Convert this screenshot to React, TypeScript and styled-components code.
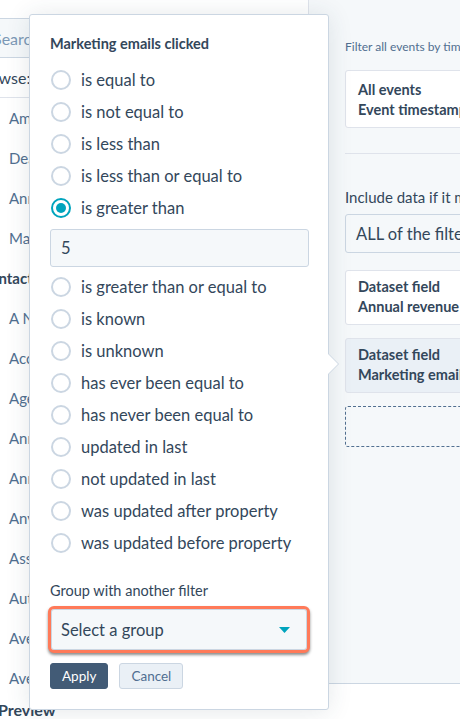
import React from "react";
import styled, { createGlobalStyle, css } from "styled-components";

const GlobalStyle = createGlobalStyle`
  html, body {
    margin: 0;
    padding: 0;
    background: #ffffff;
  }
  body {
    font-family: Lato, "Open Sans", "Liberation Sans", sans-serif;
    color: #33475b;
    -webkit-font-smoothing: antialiased;
  }
`;

const operators = [
  "is equal to",
  "is not equal to",
  "is less than",
  "is less than or equal to",
  "is greater than",
];

const moreOperators = [
  "is greater than or equal to",
  "is known",
  "is unknown",
  "has ever been equal to",
  "has never been equal to",
  "updated in last",
  "not updated in last",
  "was updated after property",
  "was updated before property",
];

const dealProps = ["Amount", "Deal name", "Annual revenue", "Marketing emails clicked"];
const contactProps = [
  "A Number",
  "Accepted terms",
  "Age",
  "Annual revenue",
  "Annual revenue range",
  "Any page view",
  "Associated company",
  "Automation status",
  "Average pageviews",
  "Average time on page",
];

const App = () => {
  return (
    <>
      <GlobalStyle />
      <Page>
        <Main>
          <LeftPanel>
            <SearchBox>Search</SearchBox>
            <BrowseRow>Browse:</BrowseRow>
            {dealProps.map((p) => (
              <PropRow key={p}>{p}</PropRow>
            ))}
            <GroupHeader>Contact properties</GroupHeader>
            {contactProps.map((p) => (
              <PropRow key={p}>{p}</PropRow>
            ))}
          </LeftPanel>

          <RightPanel>
            <Hint>Filter all events by timestamp</Hint>
            <Card $tall>
              <span>All events</span>
              <span>Event timestamp</span>
            </Card>
            <Divider />
            <SectionLabel>Include data if it matches</SectionLabel>
            <FakeSelect>ALL of the filters below</FakeSelect>
            <Card>
              <span>Dataset field</span>
              <span>Annual revenue</span>
            </Card>
            <Card $active>
              <span>Dataset field</span>
              <span>Marketing emails clicked</span>
            </Card>
            <DropZone />
          </RightPanel>
        </Main>

        <Footer>Preview</Footer>

        <Popover>
          <Title>Marketing emails clicked</Title>
          <OptionList $gap={11}>
            {operators.map((o) => (
              <Option key={o}>
                <Radio $checked={o === "is greater than"} />
                {o}
              </Option>
            ))}
          </OptionList>
          <ValueInput>5</ValueInput>
          <OptionList $gap={0}>
            {moreOperators.map((o) => (
              <Option key={o}>
                <Radio />
                {o}
              </Option>
            ))}
          </OptionList>
          <GroupLabel>Group with another filter</GroupLabel>
          <GroupSelect>
            Select a group
            <svg width="11" height="6" viewBox="0 0 11 6">
              <path d="M0 0 L11 0 L5.5 6 Z" fill="#00a4bd" />
            </svg>
          </GroupSelect>
          <Actions>
            <Button $primary>Apply</Button>
            <Button>Cancel</Button>
          </Actions>
        </Popover>
      </Page>
    </>
  );
};

export default App;

const Page = styled.div`
  position: relative;
  width: 460px;
  height: 719px;
  overflow: hidden;
  background: #fff;
`;

const Main = styled.div`
  display: grid;
  grid-template-columns: 308px 1fr;
  height: 684px;
`;

const LeftPanel = styled.div`
  display: flex;
  flex-direction: column;
  overflow: hidden;
  font-size: 15px;
`;

const SearchBox = styled.div`
  flex-shrink: 0;
  margin: 18px 0 0 -20px;
  height: 40px;
  box-sizing: border-box;
  display: flex;
  align-items: center;
  padding-left: 12px;
  background: #f5f8fa;
  border: 1px solid #cbd6e2;
  border-radius: 3px;
  color: #7c98b6;
  font-size: 16px;
`;

const BrowseRow = styled.div`
  flex-shrink: 0;
  height: 40px;
  box-sizing: border-box;
  display: flex;
  align-items: center;
  margin-left: -26px;
  border-bottom: 1px solid #dfe3eb;
  color: #33475b;
  font-size: 16px;
`;

const PropRow = styled.div`
  height: 40px;
  flex-shrink: 0;
  display: flex;
  align-items: center;
  padding-left: 9px;
  color: #516f90;
  white-space: nowrap;
`;

const GroupHeader = styled(PropRow)`
  padding-left: 0;
  margin-left: -20px;
  color: #33475b;
  font-weight: 700;
`;

const RightPanel = styled.div`
  display: flex;
  flex-direction: column;
  overflow: hidden;
  background: #f5f8fa;
  border-left: 1px solid #dfe3eb;
  border-bottom: 1px solid #cbd6e2;
  padding: 39px 0 0 36px;
`;

const Hint = styled.div`
  font-size: 12px;
  line-height: 16px;
  color: #516f90;
  white-space: nowrap;
`;

const Card = styled.div<{ $tall?: boolean; $active?: boolean }>`
  width: 220px;
  flex-shrink: 0;
  display: flex;
  flex-direction: column;
  box-sizing: border-box;
  margin-top: 13px;
  padding: 6px 12px 7px;
  background: #fff;
  border: 1px solid #dfe3eb;
  border-radius: 3px;
  font-size: 14.5px;
  font-weight: 700;
  line-height: 20px;
  color: #33475b;
  white-space: nowrap;
  ${(p) =>
    p.$tall &&
    css`
      margin-top: 15px;
      padding: 9px 12px 7px;
    `}
  ${(p) =>
    p.$active &&
    css`
      background: #eaf0f6;
      border-color: #dfe3eb;
    `}
`;

const Divider = styled.div`
  height: 1px;
  width: 200px;
  margin-top: 25px;
  background: #dfe3eb;
`;

const SectionLabel = styled.div`
  margin-top: 34px;
  font-size: 15px;
  line-height: 18px;
  white-space: nowrap;
`;

const FakeSelect = styled.div`
  width: 220px;
  height: 39px;
  margin-top: 8px;
  box-sizing: border-box;
  display: flex;
  align-items: center;
  padding-left: 10px;
  background: #f5f8fa;
  border: 1px solid #cbd6e2;
  border-radius: 3px;
  font-size: 16.5px;
  white-space: nowrap;
  margin-bottom: 4px;
`;

const DropZone = styled.div`
  width: 220px;
  height: 41px;
  margin-top: 13px;
  box-sizing: border-box;
  border: 1px dashed #516f90;
  border-radius: 3px;
`;

const Footer = styled.div`
  height: 35px;
  display: flex;
  align-items: flex-end;
  padding-bottom: 1px;
  margin-left: -2px;
  font-size: 16px;
  font-weight: 700;
  color: #33475b;
`;

const Popover = styled.div`
  position: absolute;
  left: 29px;
  top: 14px;
  width: 300px;
  height: 696px;
  box-sizing: border-box;
  display: flex;
  flex-direction: column;
  padding: 20px 20px;
  background: #fff;
  border: 1px solid #cbd6e2;
  border-radius: 3px;
  box-shadow: 0 1px 24px 0 rgba(45, 62, 80, 0.12);

  &::before,
  &::after {
    content: "";
    position: absolute;
    top: 338px;
    right: -11px;
    border-style: solid;
    border-width: 11px 0 11px 11px;
    border-color: transparent transparent transparent #cbd6e2;
  }
  &::after {
    right: -10px;
    border-color: transparent transparent transparent #fff;
  }
`;

const Title = styled.div`
  font-size: 14.5px;
  line-height: 18px;
  font-weight: 700;
  color: #33475b;
`;

const OptionList = styled.div<{ $gap: number }>`
  display: flex;
  flex-direction: column;
  margin-top: ${(p) => p.$gap}px;
`;

const Option = styled.label`
  height: 32px;
  display: flex;
  align-items: center;
  gap: 10px;
  font-size: 16.5px;
  color: #33475b;
  white-space: nowrap;
`;

const Radio = styled.span<{ $checked?: boolean }>`
  width: 20px;
  height: 20px;
  margin-left: 1px;
  box-sizing: border-box;
  border-radius: 50%;
  border: 2px solid ${(p) => (p.$checked ? "#00a4bd" : "#cbd6e2")};
  background: #fff;
  display: flex;
  align-items: center;
  justify-content: center;
  flex-shrink: 0;

  &::after {
    content: "";
    width: 10px;
    height: 10px;
    border-radius: 50%;
    background: ${(p) => (p.$checked ? "#00a4bd" : "transparent")};
  }
`;

const ValueInput = styled.div`
  flex-shrink: 0;
  height: 38px;
  width: 259px;
  margin: 5px 0 4px;
  box-sizing: border-box;
  display: flex;
  align-items: center;
  padding-left: 10px;
  background: #f5f8fa;
  border: 1px solid #cbd6e2;
  border-radius: 3px;
  font-size: 16.5px;
  color: #33475b;
`;

const GroupLabel = styled.div`
  margin-top: 23px;
  font-size: 14.5px;
  line-height: 18px;
  color: #33475b;
`;

const GroupSelect = styled.div`
  flex-shrink: 0;
  height: 47px;
  margin: 6px -2px 0;
  box-sizing: border-box;
  display: flex;
  align-items: center;
  justify-content: space-between;
  padding: 0 17px 0 10px;
  background: #f5f8fa;
  border: 3px solid #ff7a59;
  border-radius: 6px;
  box-shadow: 0 2px 3px rgba(0, 0, 0, 0.45), inset 0 0 0 1px #cbd6e2;
  font-size: 16.5px;
  color: #33475b;
`;

const Actions = styled.div`
  display: flex;
  gap: 11px;
  margin-top: 10px;
`;

const Button = styled.button<{ $primary?: boolean }>`
  height: 26px;
  box-sizing: border-box;
  padding: 0 11px;
  font-family: inherit;
  font-size: 13.5px;
  border-radius: 3px;
  border: 1px solid ${(p) => (p.$primary ? "#425b76" : "#cbd6e2")};
  background: ${(p) => (p.$primary ? "#425b76" : "#eaf0f6")};
  color: ${(p) => (p.$primary ? "#fff" : "#506e91")};
  cursor: pointer;
`;
